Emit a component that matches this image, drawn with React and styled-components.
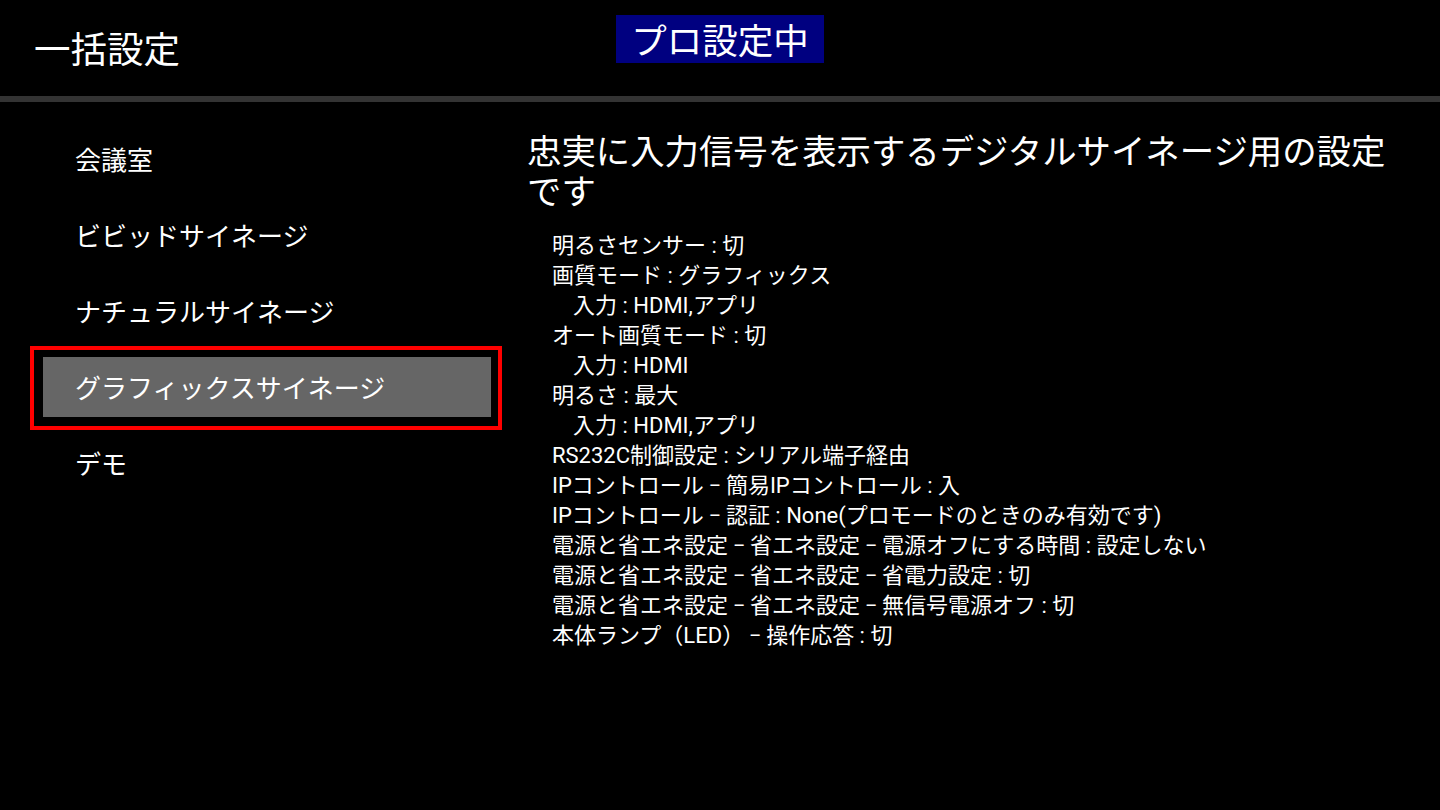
import React from "react";
import styled, { createGlobalStyle } from "styled-components";

const GlobalStyle = createGlobalStyle`
  html, body {
    margin: 0;
    padding: 0;
    background: #000;
  }
  body {
    width: 1440px;
    height: 810px;
    overflow: hidden;
    color: #fff;
    font-family: "Noto Sans CJK JP", sans-serif;
  }
`;

const Screen = styled.div`
  width: 1440px;
  height: 810px;
  display: flex;
  flex-direction: column;
  background: #000;
`;

const Header = styled.header`
  height: 96px;
  display: grid;
  grid-template-columns: 1fr auto 1fr;
  align-items: start;
`;

const Title = styled.h1`
  margin: 0;
  padding: 29px 0 0 34px;
  font-size: 36.5px;
  font-weight: 400;
  line-height: 38px;
`;

const Badge = styled.div`
  margin-top: 15px;
  height: 48px;
  padding: 0 15px;
  background: #000080;
  font-size: 35.5px;
  line-height: 48px;
`;

const Divider = styled.div`
  height: 6px;
  background: #333;
`;

const Body = styled.main`
  flex: 1;
  display: flex;
  padding-top: 27px;
`;

const Menu = styled.ul`
  flex: none;
  list-style: none;
  margin: 0;
  padding: 0 0 0 43px;
  width: 484px;
  display: flex;
  flex-direction: column;
  gap: 16px;
`;

const MenuItem = styled.li`
  position: relative;
  width: 448px;
  height: 60px;
  box-sizing: border-box;
  padding-left: 32px;
  font-size: 26px;
  line-height: 60px;
  background: ${(p) => (p.$selected ? "#666" : "transparent")};

  &::after {
    content: "";
    display: ${(p) => (p.$selected ? "block" : "none")};
    position: absolute;
    top: -11px;
    bottom: -13px;
    left: -13px;
    right: -11px;
    border: 4px solid #f00;
  }
`;

const Detail = styled.section`
  flex: 1;
  min-width: 0;
  padding-left: 0;
`;

const Heading = styled.h2`
  margin: 0;
  max-width: 880px;
  font-size: 34.4px;
  font-weight: 400;
  line-height: 40px;
`;

const SettingList = styled.ul`
  list-style: none;
  margin: 22px 0 0;
  padding: 0 0 0 25px;
  font-family: Roboto, "Noto Sans CJK JP", sans-serif;
  font-size: 22px;
  line-height: 30px;
`;

const Setting = styled.li`
  padding-left: ${(p) => (p.$indent ? "21px" : "0")};
  white-space: nowrap;
`;

const Sep = styled.span`
  display: inline-block;
  width: 22px;
  text-align: center;
`;

const menu = [
  "会議室",
  "ビビッドサイネージ",
  "ナチュラルサイネージ",
  "グラフィックスサイネージ",
  "デモ",
];

const settings = [
  { label: ["明るさセンサー"], value: "切" },
  { label: ["画質モード"], value: "グラフィックス" },
  { label: ["入力"], value: "HDMI,アプリ", indent: true },
  { label: ["オート画質モード"], value: "切" },
  { label: ["入力"], value: "HDMI", indent: true },
  { label: ["明るさ"], value: "最大" },
  { label: ["入力"], value: "HDMI,アプリ", indent: true },
  { label: ["RS232C制御設定"], value: "シリアル端子経由" },
  { label: ["IPコントロール", "簡易IPコントロール"], value: "入" },
  { label: ["IPコントロール", "認証"], value: "None(プロモードのときのみ有効です)" },
  { label: ["電源と省エネ設定", "省エネ設定", "電源オフにする時間"], value: "設定しない" },
  { label: ["電源と省エネ設定", "省エネ設定", "省電力設定"], value: "切" },
  { label: ["電源と省エネ設定", "省エネ設定", "無信号電源オフ"], value: "切" },
  { label: ["本体ランプ（LED）", "操作応答"], value: "切" },
];

export default function App() {
  const selected = 3;
  return (
    <Screen>
      <GlobalStyle />
      <Header>
        <Title>一括設定</Title>
        <Badge>プロ設定中</Badge>
      </Header>
      <Divider />
      <Body>
        <Menu>
          {menu.map((m, i) => (
            <MenuItem key={m} $selected={i === selected}>
              {m}
            </MenuItem>
          ))}
        </Menu>
        <Detail>
          <Heading>忠実に入力信号を表示するデジタルサイネージ用の設定です</Heading>
          <SettingList>
            {settings.map((s, i) => (
              <Setting key={i} $indent={s.indent}>
                {s.label.map((part, j) => (
                  <React.Fragment key={j}>
                    {j > 0 && <Sep>−</Sep>}
                    {part}
                  </React.Fragment>
                ))}
                {" : "}
                {s.value}
              </Setting>
            ))}
          </SettingList>
        </Detail>
      </Body>
    </Screen>
  );
}
